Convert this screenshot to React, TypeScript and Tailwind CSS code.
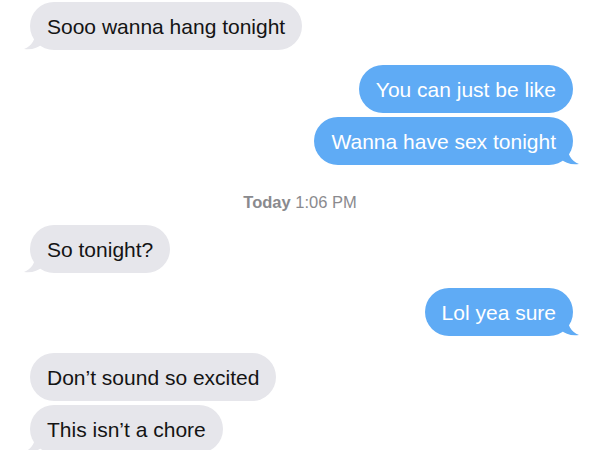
import React from 'react';

type Side = 'left' | 'right';

interface BubbleProps {
  side: Side;
  text: string;
  tail?: boolean;
  className?: string;
}

const Tail: React.FC<{ side: Side }> = ({ side }) => (
  <svg
    viewBox="0 0 20 22"
    className={
      side === 'left'
        ? 'absolute -left-[7px] bottom-0 w-[20px] h-[22px] text-[#e6e6eb]'
        : 'absolute -right-[7px] bottom-0 w-[20px] h-[22px] text-[#5fabf5] -scale-x-100'
    }
  >
    <path d="M13 0 C13 11 9 18 1 21 C9 22 15 20 19 16 L20 0 Z" fill="currentColor" />
  </svg>
);

const Bubble: React.FC<BubbleProps> = ({ side, text, tail, className = '' }) => {
  const colors = side === 'left' ? 'bg-[#e6e6eb] text-[#141414]' : 'bg-[#5fabf5] text-white';
  const place = side === 'left' ? 'self-start ml-[30px]' : 'self-end mr-[27px]';
  return (
    <div className={`relative ${place} ${className}`}>
      {tail && <Tail side={side} />}
      <div className={`relative h-[48px] flex items-center px-[17px] rounded-[24px] text-[21px] leading-[25px] whitespace-nowrap ${colors}`}>
        {text}
      </div>
    </div>
  );
};

export default function App() {
  return (
    <div
      className="w-[600px] h-[450px] overflow-hidden bg-white flex flex-col pt-[2px]"
      style={{ fontFamily: '"Liberation Sans", Arial, sans-serif' }}
    >
      <Bubble side="left" text="Sooo wanna hang tonight" tail />
      <Bubble side="right" text="You can just be like" className="mt-[15px]" />
      <Bubble side="right" text="Wanna have sex tonight" tail className="mt-[4px]" />

      <div className="mt-[27px] text-center text-[16.5px] leading-[20px] text-[#8a8a8e]">
        <span className="font-bold">Today</span> 1:06 PM
      </div>

      <Bubble side="left" text="So tonight?" tail className="mt-[13px]" />
      <Bubble side="right" text="Lol yea sure" tail className="mt-[15px]" />
      <Bubble side="left" text="Don’t sound so excited" className="mt-[17px]" />
      <Bubble side="left" text="This isn’t a chore" tail className="mt-[4px]" />
    </div>
  );
}
